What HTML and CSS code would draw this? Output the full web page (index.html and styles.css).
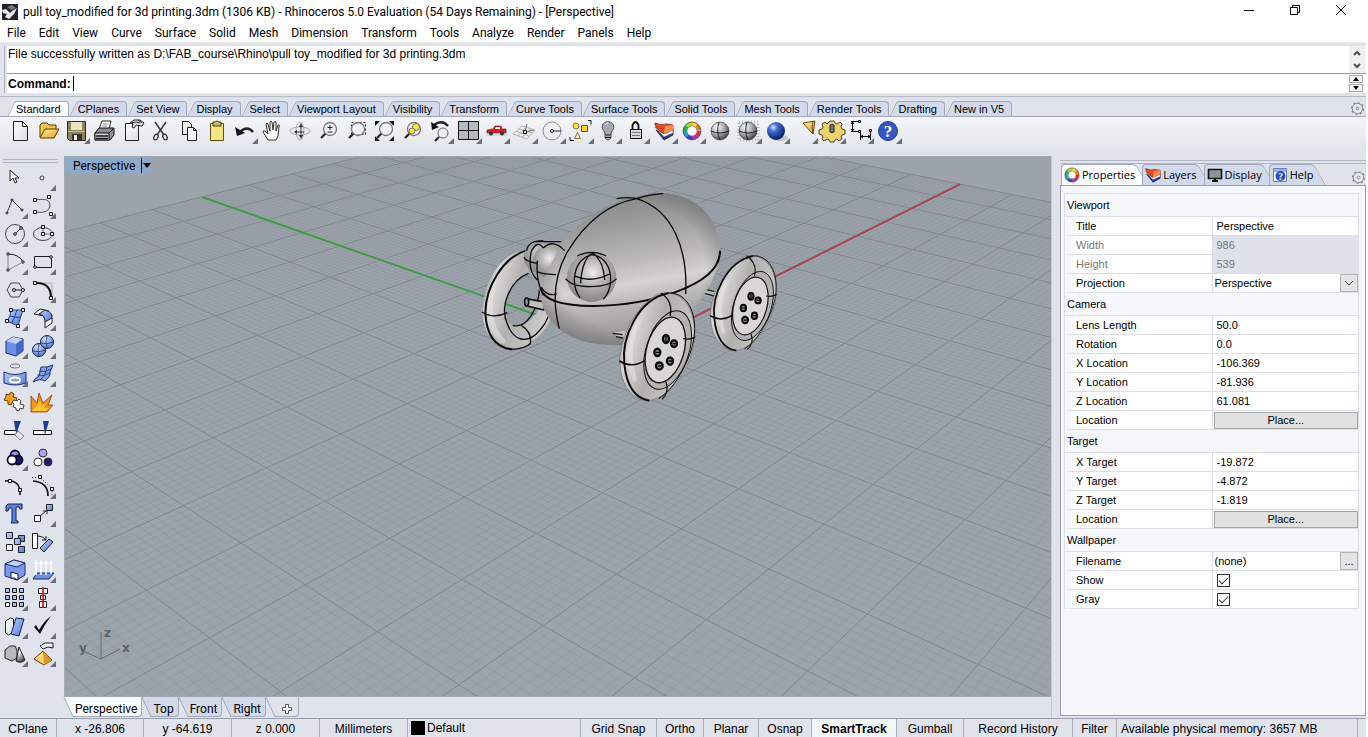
FILE: index.html
```html
<!DOCTYPE html>
<html lang="en">
<head>
    <meta charset="UTF-8">
    <meta name="viewport" content="width=device-width, initial-scale=1.0">
    <title>pull toy_modified for 3d printing.3dm - Rhinoceros 5.0</title>
    <link rel="stylesheet" href="styles.css">
</head>
<body>
    <!-- shared icons and gradients -->
    <svg class="defs" aria-hidden="true">
        <defs>
            <linearGradient id="paper" x1="0" y1="0" x2="1" y2="1"><stop offset="0" stop-color="#fff"/><stop offset="1" stop-color="#d9dce2"/></linearGradient>
            <linearGradient id="blue" x1="0" y1="0" x2="1" y2="1"><stop offset="0" stop-color="#b9cdfb"/><stop offset="1" stop-color="#5577d6"/></linearGradient>
            <linearGradient id="gold" x1="0" y1="0" x2="1" y2="1"><stop offset="0" stop-color="#fff3a8"/><stop offset="1" stop-color="#e59a1c"/></linearGradient>
            <radialGradient id="ballGray" cx=".35" cy=".3" r=".75"><stop offset="0" stop-color="#fff"/><stop offset=".5" stop-color="#a9abae"/><stop offset="1" stop-color="#3c3d40"/></radialGradient>
            <radialGradient id="ballBlue" cx=".35" cy=".3" r=".75"><stop offset="0" stop-color="#e4edff"/><stop offset=".3" stop-color="#3f6fdc"/><stop offset="1" stop-color="#04185c"/></radialGradient>
            <radialGradient id="ballSoft" cx=".4" cy=".3" r=".75"><stop offset="0" stop-color="#dfe8ff"/><stop offset="1" stop-color="#4868c8"/></radialGradient>
            <linearGradient id="tire" x1="0" y1=".2" x2="1" y2=".6"><stop offset="0" stop-color="#8d8c8b"/><stop offset=".2" stop-color="#dad8d6"/><stop offset=".5" stop-color="#b1b0ae"/><stop offset="1" stop-color="#cfcdcb"/></linearGradient>
            <linearGradient id="shell" x1=".42" y1="0" x2=".62" y2="1"><stop offset="0" stop-color="#868687"/><stop offset=".2" stop-color="#9c9b9c"/><stop offset=".45" stop-color="#bcbabb"/><stop offset=".59" stop-color="#d6d4d2"/><stop offset=".7" stop-color="#bcbab9"/><stop offset="1" stop-color="#8c8b8a"/></linearGradient>
            <radialGradient id="rim" cx=".5" cy=".48" r=".56"><stop offset=".75" stop-color="#666" stop-opacity="0"/><stop offset="1" stop-color="#666" stop-opacity=".5"/></radialGradient>
            <radialGradient id="eye" cx=".52" cy=".4" r=".62"><stop offset="0" stop-color="#efedeb"/><stop offset=".4" stop-color="#bbb9b8"/><stop offset="1" stop-color="#838281"/></radialGradient>
        </defs>
        <symbol id="ring" viewBox="0 0 18 18">
            <g fill="none" stroke-width="4">
                <circle cx="9" cy="9" r="6" pathLength="8" stroke="#e8283c" stroke-dasharray="1.1 7"/>
                <circle cx="9" cy="9" r="6" pathLength="8" stroke="#b42fb4" stroke-dasharray="1.1 7" stroke-dashoffset="-1"/>
                <circle cx="9" cy="9" r="6" pathLength="8" stroke="#3747c8" stroke-dasharray="1.1 7" stroke-dashoffset="-2"/>
                <circle cx="9" cy="9" r="6" pathLength="8" stroke="#1e9ed2" stroke-dasharray="1.1 7" stroke-dashoffset="-3"/>
                <circle cx="9" cy="9" r="6" pathLength="8" stroke="#1fb45a" stroke-dasharray="1.1 7" stroke-dashoffset="-4"/>
                <circle cx="9" cy="9" r="6" pathLength="8" stroke="#a6d827" stroke-dasharray="1.1 7" stroke-dashoffset="-5"/>
                <circle cx="9" cy="9" r="6" pathLength="8" stroke="#f6dc1e" stroke-dasharray="1.1 7" stroke-dashoffset="-6"/>
                <circle cx="9" cy="9" r="6" pathLength="8" stroke="#ef7420" stroke-dasharray="1 7" stroke-dashoffset="-7"/>
            </g>
            <circle cx="9" cy="9" r="8" fill="none" stroke="#444" stroke-width=".7"/><circle cx="9" cy="9" r="4.500" fill="#fff" stroke="#777" stroke-width=".6"/>
        </symbol>
        <symbol id="layers" viewBox="0 0 20 20">
            <path d="M2 9l8 10 9-5V9l-9 4z" fill="#24389c" stroke="#111" stroke-width=".7"/>
            <path d="M1 6l9 10 9-4V8l-9 3z" fill="#fff" stroke="#555" stroke-width=".6"/>
            <path d="M1 2q6 3 11 1l7 1v5l-9 4q-5-2-9-9z" fill="#ee4a22" stroke="#6b1408" stroke-width=".7"/>
            <path d="M11 5l8-1v5l-9 4z" fill="#ff8a50"/>
        </symbol>
        <symbol id="lens" viewBox="0 0 28 28">
            <path d="M12 16l-5 5" stroke="#222" stroke-width="2.200"/>
            <circle cx="16" cy="12" r="6.500" fill="#eef1f6" fill-opacity=".6" stroke="#777" stroke-width="1.300"/>
        </symbol>
        <symbol id="cog" viewBox="0 0 16 16">
            <circle cx="8" cy="8" r="6" fill="none" stroke="#888b92" stroke-width="2" pathLength="16" stroke-dasharray="1 1"/>
            <circle cx="8" cy="8" r="5.500" fill="#e4e7ee" stroke="#888b92"/><circle cx="8" cy="8" r="1.500" fill="none" stroke="#888b92"/>
        </symbol>
        <symbol id="wheel" viewBox="0 0 234 330">
            <path d="M124 5C60 30 2 130 4 212C7 282 42 326 87 326C152 323 228 222 228 122C228 50 190-10 124 5z" fill="url(#tire)" stroke="#6d6c6b" stroke-width="2"/>
            <path d="M60 90C34 140 28 200 48 262" fill="none" stroke="#e9e7e5" stroke-width="14" opacity=".5" stroke-linecap="round"/>
            <ellipse cx="147" cy="174" rx="64" ry="122" transform="rotate(18 147 174)" fill="#b4b3b1" stroke="#111" stroke-width="3"/>
            <ellipse cx="140" cy="174" rx="56" ry="101" transform="rotate(16 140 174)" fill="#d9d7d5" stroke="#111" stroke-width="4"/>
            <g fill="none" stroke="#0c0c0c">
                <path d="M150 3C56 22 8 140 17 216C24 286 52 320 92 326" stroke-width="6"/>
                <path d="M150 3C200 2 228 50 228 110C228 190 170 290 120 320" stroke-width="3"/>
                <path d="M2 207Q40 230 78 206" stroke-width="5"/>
                <path d="M128 4C154 22 160 48 154 72M142 270C150 290 144 310 130 322M194 140Q215 144 230 135" stroke-width="4"/>
            </g>
            <g fill="#8d8c8b" stroke="#070707" stroke-width="7">
                <ellipse cx="142" cy="141" rx="9" ry="12"/><ellipse cx="166" cy="155" rx="9" ry="10"/><ellipse cx="116" cy="181" rx="9" ry="11"/><ellipse cx="154" cy="207" rx="9" ry="11"/><ellipse cx="122" cy="222" rx="10" ry="11"/>
                <path d="M142 131v20M162 155h10M112 181h10M150 207h10M118 222h10" stroke-width="4"/>
            </g>
        </symbol>
    </svg>

    <div class="app">
        <header class="titlebar">
            <svg class="app-icon" viewBox="0 0 16 16"><path d="M0 0h16v16H0z" fill="#20242a"/><path d="M0 6l4-1 4 4 2-2 5-3-3 6-5 5-4-2 2-3-4-1z" fill="#e8e8e8"/><path d="M5 3l5-2 4 3-5 2z" fill="#777"/></svg>
            <h1 class="title">pull toy_modified for 3d printing.3dm (1306 KB) - Rhinoceros 5.0 Evaluation (54 Days Remaining) - [Perspective]</h1>
            <div class="window-buttons">
                <button aria-label="Minimize"><svg viewBox="0 0 12 12"><path d="M1 6.500h10"/></svg></button>
                <button aria-label="Restore"><svg viewBox="0 0 12 12"><path d="M1.500 3.500h7v7h-7zM3.500 3.500v-2h7v7h-2"/></svg></button>
                <button aria-label="Close"><svg viewBox="0 0 12 12"><path d="M1 1l10 10M11 1L1 11"/></svg></button>
            </div>
        </header>

        <nav class="menu">
            <a href="#">File</a><a href="#">Edit</a><a href="#">View</a><a href="#">Curve</a><a href="#">Surface</a><a href="#">Solid</a><a href="#">Mesh</a><a href="#">Dimension</a><a href="#">Transform</a><a href="#">Tools</a><a href="#">Analyze</a><a href="#">Render</a><a href="#">Panels</a><a href="#">Help</a>
        </nav>

        <section class="command">
            <div class="history">
                <p>File successfully written as D:\FAB_course\Rhino\pull toy_modified for 3d printing.3dm</p>
                <div class="scroll">
                    <button aria-label="Scroll up"><svg viewBox="0 0 8 6"><path d="M1 5l3-3 3 3"/></svg></button>
                    <button aria-label="Scroll down"><svg viewBox="0 0 8 6"><path d="M1 1l3 3 3-3"/></svg></button>
                </div>
            </div>
            <div class="prompt">
                <label for="cmd">Command:</label>
                <input id="cmd" type="text">
                <div class="spin">
                    <button aria-label="Previous"><svg viewBox="0 0 6 4"><path d="M0 4l3-4 3 4z"/></svg></button>
                    <button aria-label="Next"><svg viewBox="0 0 6 4"><path d="M0 0l3 4 3-4z"/></svg></button>
                </div>
            </div>
        </section>

        <section class="ribbon">
            <div class="ribbon-tabs">
                <button class="tab active">Standard</button><button class="tab">CPlanes</button><button class="tab">Set View</button><button class="tab">Display</button><button class="tab">Select</button><button class="tab">Viewport Layout</button><button class="tab">Visibility</button><button class="tab">Transform</button><button class="tab">Curve Tools</button><button class="tab">Surface Tools</button><button class="tab">Solid Tools</button><button class="tab">Mesh Tools</button><button class="tab">Render Tools</button><button class="tab">Drafting</button><button class="tab">New in V5</button>
                <button class="options" aria-label="Toolbar options"><svg><use href="#cog"/></svg></button>
            </div>
            <div class="tools">
                <button class="tool" aria-label="New"><svg viewBox="0 0 28 28"><path d="M7.500 4.500h9l5 5v14h-14zM16.500 4.500v5h5" fill="url(#paper)" stroke="#222"/></svg></button>
                <button class="tool" aria-label="Open"><svg viewBox="0 0 28 28"><path d="M6 20V8l2-2h5l2 2h7v4" fill="#f3c64a" stroke="#5a3b00"/><path d="M6 21l5-9h14l-5 9z" fill="url(#gold)" stroke="#5a3b00"/></svg></button>
                <button class="tool more" aria-label="Save"><svg viewBox="0 0 28 28"><path d="M5.500 4.500h18v19h-16l-2-2z" fill="#8c8458" stroke="#2c2816"/><path d="M9 5h11v8H9z" fill="#e9e5c6"/><path d="M10 17h10v6H10z" fill="#333"/><path d="M12 18h3v5h-3z" fill="#eee"/><path d="M6 14.500h17" stroke="#c6bf8d"/></svg></button>
                <button class="tool" aria-label="Print"><svg viewBox="0 0 28 28"><path d="M9 12l3-8h9l-2 8z" fill="#fff" stroke="#222"/><path d="M13 7h5M12 9h5" stroke="#888"/><path d="M5 16l4-5h15v7l-4 5H5z" fill="#8b8d90" stroke="#111"/><path d="M5 16h14v7H5z" fill="#d6d8dc" stroke="#111"/><path d="M6 19h12M6 21.500h12" stroke="#111" stroke-width="1.500"/><path d="M19 16l5-5" stroke="#111"/></svg></button>
                <button class="tool" aria-label="Document properties"><svg viewBox="0 0 28 28"><path d="M7.500 6.500h13v17h-13z" fill="url(#paper)" stroke="#222"/><path d="M12 6l4-3h6l4 3-2 3-6-1-2 3-2-1 1-3z" fill="#e8e8e8" stroke="#222"/><path d="M13 6l5-1 4 1M20 3l4 3" stroke="#222" fill="none"/></svg></button>
                <button class="tool" aria-label="Cut"><svg viewBox="0 0 28 28"><path d="M9 5l9 13M20 5L11 18" stroke="#333" stroke-width="1.400"/><ellipse cx="10" cy="20" rx="2" ry="3" transform="rotate(25 10 20)" fill="none" stroke="#333" stroke-width="1.300"/><ellipse cx="19" cy="20" rx="2" ry="3" transform="rotate(-25 19 20)" fill="none" stroke="#333" stroke-width="1.300"/></svg></button>
                <button class="tool" aria-label="Copy"><svg viewBox="0 0 28 28"><path d="M8.500 4.500h6l3 3v10h-9z" fill="url(#paper)" stroke="#222"/><path d="M13.500 10.500h6l3 3v10h-9zM19.500 10.500v3h3" fill="#f6f7f9" stroke="#222"/></svg></button>
                <button class="tool" aria-label="Paste"><svg viewBox="0 0 28 28"><path d="M8.500 6.500h13v17h-13z" fill="#f7e684" stroke="#5d5010"/><path d="M11 5h2l2-1 2 1h2v4h-8z" fill="#c9b968" stroke="#4a3f0e"/></svg></button>
                <button class="tool more" aria-label="Undo"><svg viewBox="0 0 28 28"><path d="M23 15q-6-7-13 0" fill="none" stroke="#222" stroke-width="2.600"/><path d="M5 10l2 9 8-3z" fill="#111"/></svg></button>
                <button class="tool" aria-label="Pan"><svg viewBox="0 0 28 28"><path d="M10 23l-5-8q0-2 2-1l3 3-2-10q1-2 2 0l2 7V5q1-2 2 0l1 8 1-8q1-1 2 0v9l2-6q2-1 1 2l-1 9-2 4z" fill="#f8f8f8" stroke="#333"/></svg></button>
                <button class="tool" aria-label="Rotate view"><svg viewBox="0 0 28 28"><ellipse cx="14" cy="14" rx="10" ry="4" fill="none" stroke="#aaa"/><ellipse cx="14" cy="14" rx="4" ry="9" fill="none" stroke="#aaa"/><path d="M15 10v8M10 15h8" stroke="#333"/><path d="M15 6l2 4h-4zM15 22l-2-4h4zM11 13v4l-3-2z" fill="#333"/></svg></button>
                <button class="tool" aria-label="Zoom dynamic"><svg viewBox="0 0 28 28"><use href="#lens"/><path d="M16 8v5M13.500 10.500h5M13.500 15h5" stroke="#222"/></svg></button>
                <button class="tool" aria-label="Zoom window"><svg viewBox="0 0 28 28"><path d="M9.500 5.500h14v12h-14z" fill="none" stroke="#222" stroke-dasharray="2 2"/><use href="#lens"/></svg></button>
                <button class="tool" aria-label="Zoom extents"><svg viewBox="0 0 28 28"><use href="#lens"/><path d="M5 4h5l-5 5zM24 4h-5l5 5zM5 24h5l-5-5zM24 24h-5l5-5z" fill="#111"/></svg></button>
                <button class="tool" aria-label="Zoom selected"><svg viewBox="0 0 28 28"><use href="#lens"/><circle cx="18" cy="10" r="3.500" fill="#f7e53a" stroke="#777"/><circle cx="14" cy="14" r="3" fill="#f7e53a" stroke="#777"/></svg></button>
                <button class="tool more" aria-label="Undo view"><svg viewBox="0 0 28 28"><path d="M22 9q-6-7-14-1" fill="none" stroke="#222" stroke-width="2.400"/><path d="M5 5l1 8 7-3z" fill="#111"/><path d="M13 20l-4 4" stroke="#222" stroke-width="2"/><circle cx="17" cy="16" r="5" fill="#eef1f6" stroke="#666"/></svg></button>
                <button class="tool more" aria-label="4 View"><svg viewBox="0 0 28 28"><path d="M4.500 4.500h20v18h-20zM14.500 4.500v18M4.500 13.500h20" fill="#b5b9c0" stroke="#111"/></svg></button>
                <button class="tool more" aria-label="Right view"><svg viewBox="0 0 28 28"><path d="M4 18h21" stroke="#bfc3cb"/><path d="M5 13l6-1 2-3h6l1 3h4v4H5z" fill="#d31f26" stroke="#6f0b0f" stroke-width=".6"/><path d="M13 12l1-2h4v2z" fill="#fff"/><circle cx="9" cy="16.500" r="2" fill="#333"/><circle cx="20" cy="16.500" r="2" fill="#333"/></svg></button>
                <button class="tool more" aria-label="Set CPlane"><svg viewBox="0 0 28 28"><path d="M3 17l9-8 13 4-8 9zM6 14l13 5M9 12l13 4M8 19l8-9M12 20l9-8" fill="none" stroke="#b5b0a8"/><path d="M15 15l2-8M15 15l9-2" stroke="#777" fill="none"/><path d="M13.500 13.500h3v3h-3z" fill="#fff" stroke="#111"/></svg></button>
                <button class="tool more" aria-label="Object snap"><svg viewBox="0 0 28 28"><circle cx="14" cy="14" r="9" fill="none" stroke="#8b8e94"/><path d="M14 14h9" stroke="#333"/><circle cx="14" cy="14" r="1.500" fill="#fff" stroke="#222"/></svg></button>
                <button class="tool more" aria-label="Select"><svg viewBox="0 0 28 28"><circle cx="10" cy="9" r="3" fill="#ffdf27" stroke="#777"/><path d="M15.500 8.500h6v6h-6z" fill="#ffd21f" stroke="#a03c00"/><path d="M8.500 21.500l3-6 3 6z" fill="#fbe9d2" stroke="#a0703c"/><path d="M22 3.500h3v4M4 20v3.500h4" fill="none" stroke="#111"/></svg></button>
                <button class="tool more" aria-label="Hide"><svg viewBox="0 0 28 28"><path d="M11 17q0-2-2-4-2-3 0-6 5-5 10 0 2 3 0 6-2 2-2 4v4q-3 4-6 0z" fill="#a6a9ad" stroke="#55585c"/><path d="M11 18h6M11 20.500h6" stroke="#222"/><path d="M11 8q1-2 3-2" stroke="#fff" fill="none"/></svg></button>
                <button class="tool more" aria-label="Lock"><svg viewBox="0 0 28 28"><path d="M10.500 13V8q3-6 6 0v5" fill="none" stroke="#111" stroke-width="1.800"/><path d="M8.500 12.500h11v9h-11z" fill="#d9dadd" stroke="#111"/><path d="M10 15.500h8M10 18.500h8" stroke="#777"/></svg></button>
                <button class="tool more" aria-label="Layers"><svg viewBox="0 0 28 28"><use href="#layers" x="4" y="4" width="20" height="20"/></svg></button>
                <button class="tool more" aria-label="Object properties"><svg viewBox="0 0 28 28"><use href="#ring" x="4" y="4" width="20" height="20"/></svg></button>
                <button class="tool" aria-label="Shade"><svg viewBox="0 0 28 28"><circle cx="14" cy="14" r="9" fill="url(#ballGray)" stroke="#333" stroke-width=".6"/><path d="M5 14q9 4 18 0M13 5q-3 9 1 18" fill="none" stroke="#222"/></svg></button>
                <button class="tool more" aria-label="Shaded viewport"><svg viewBox="0 0 28 28"><path d="M5 5h19v18H5z" fill="none" stroke="#bbb" stroke-dasharray="1 2" stroke-width="3"/><circle cx="14" cy="14" r="9" fill="url(#ballGray)" stroke="#333" stroke-width=".6"/><path d="M5 14q9 4 18 0M13 5q-3 9 1 18" fill="none" stroke="#222"/></svg></button>
                <button class="tool more" aria-label="Render"><svg viewBox="0 0 28 28"><ellipse cx="18" cy="21" rx="8" ry="3" fill="#9a9ca0" opacity=".5"/><circle cx="14" cy="14" r="9" fill="url(#ballBlue)"/></svg></button>
                <button class="tool more" aria-label="Spotlight"><svg viewBox="0 0 28 28"><path d="M13 6l12-2-2 13z" fill="url(#gold)" stroke="#6b4a12"/><path d="M23 4q-2 6 0 13" fill="none" stroke="#6b4a12"/></svg></button>
                <button class="tool more" aria-label="Options"><svg viewBox="0 0 28 28"><path d="M11 5l1-1h4l1 2 2 1 3-2 2 2-1 3 1 2 3 1v4l-3 1-1 2 1 2-3 2-2-2-2 1-1 2h-4l-1-2-2-1-3 2-2-2 1-2-1-2-3-1v-4l3-1 1-2-1-3 3-2 2 2z" fill="#ead36f" stroke="#54431a"/><path d="M12 8q2-1 4 0v7q-2 1-4 0z" fill="#777" stroke="#222"/></svg></button>
                <button class="tool more" aria-label="Dimension"><svg viewBox="0 0 28 28"><path d="M5 4.500h9M5 14.500h8M6.500 5v9M14.500 14v9M24.500 14v9M15 19.500h9" stroke="#111" fill="none"/><path d="M6.500 4l2 3h-4zM6.500 15l2-3h-4zM14 19.500l3-2v4zM25 19.500l-3-2v4z" fill="#111"/><path d="M12.500 3.500h2v2h-2zM12.500 13.500h2v2h-2zM23.500 12.500h2v2h-2z" fill="#fff" stroke="#111"/></svg></button>
                <button class="tool more" aria-label="Help"><svg viewBox="0 0 28 28"><circle cx="14" cy="14" r="9.500" fill="#3556c4" stroke="#24408f"/><text x="14" y="20" class="glyph">?</text></svg></button>
            </div>
        </section>

        <main class="work">
            <aside class="side">
                <div class="grip"></div>
                <div class="side-tools">
                    <button class="tool" aria-label="Cancel"><svg viewBox="0 0 28 28"><path d="M10 6v11l3-3 2 5 2-1-2-4h4z" fill="#fff" stroke="#222"/></svg></button>
                    <button class="tool more" aria-label="Point"><svg viewBox="0 0 28 28"><circle cx="14" cy="14" r="2" fill="#fff" stroke="#333"/></svg></button>
                    <button class="tool more" aria-label="Polyline"><svg viewBox="0 0 28 28"><path d="M7 21l5-13 10 10" fill="none" stroke="#444"/><g fill="#fff" stroke="#111"><circle cx="7" cy="21" r="1"/><circle cx="12" cy="8" r="1"/><circle cx="22" cy="18" r="1"/></g></svg></button>
                    <button class="tool more" aria-label="Curve"><svg viewBox="0 0 28 28"><path d="M7 8q16-3 15 6-1 8-15 6" fill="none" stroke="#555"/><path d="M5.500 6.500h3v3h-3zM19.500 3.500h3v3h-3zM5.500 18.500h3v3h-3zM21.500 20.500h3v3h-3z" fill="#fff" stroke="#111"/></svg></button>
                    <button class="tool more" aria-label="Circle"><svg viewBox="0 0 28 28"><circle cx="15" cy="14" r="9.500" fill="none" stroke="#444"/><path d="M15 14l6-6" stroke="#333"/><g fill="#fff" stroke="#111"><circle cx="15" cy="14" r="1.300"/><circle cx="21" cy="8" r="1.300"/></g></svg></button>
                    <button class="tool more" aria-label="Ellipse"><svg viewBox="0 0 28 28"><ellipse cx="15" cy="14" rx="9.500" ry="6.500" fill="none" stroke="#444"/><path d="M15 7v7h9" fill="none" stroke="#777"/><path d="M13.500 5.500h3v3h-3zM13.500 12.500h3v3h-3zM22.500 12.500h3v3h-3z" fill="#fff" stroke="#111"/></svg></button>
                    <button class="tool more" aria-label="Arc"><svg viewBox="0 0 28 28"><path d="M8 22V6M8 22l15-8" fill="none" stroke="#888"/><path d="M8 6q11 0 15 8" fill="none" stroke="#222"/><g fill="#fff" stroke="#111"><circle cx="8" cy="6" r="1.200"/><circle cx="8" cy="22" r="1.200"/><circle cx="23" cy="14" r="1.200"/></g></svg></button>
                    <button class="tool more" aria-label="Rectangle"><svg viewBox="0 0 28 28"><path d="M6.500 8.500h17v11h-17z" fill="none" stroke="#222"/><g fill="#fff" stroke="#111"><circle cx="23" cy="9" r="1.300"/><circle cx="7" cy="19" r="1.300"/></g></svg></button>
                    <button class="tool more" aria-label="Polygon"><svg viewBox="0 0 28 28"><path d="M7 14l4-7h8l4 7-4 7h-8z" fill="none" stroke="#444"/><path d="M14 14h9" stroke="#222"/><g fill="#fff" stroke="#111"><circle cx="14" cy="14" r="1.500"/><circle cx="23" cy="14" r="1.500"/></g></svg></button>
                    <button class="tool more" aria-label="Fillet curves"><svg viewBox="0 0 28 28"><path d="M7 7h17v16" fill="none" stroke="#aaa"/><path d="M7 7q16-1 16 15" fill="none" stroke="#111" stroke-width="2"/><path d="M5.500 5.500h3v3h-3zM21.500 20.500h3v3h-3z" fill="#fff" stroke="#111"/></svg></button>
                    <button class="tool more" aria-label="Surface from points"><svg viewBox="0 0 28 28"><path d="M11 6h12q-3 8-5 16l-11-5q4-5 4-11z" fill="url(#blue)" stroke="#223a8a"/><path d="M17 6q-3 8-5 13M10 12q6 2 11 1" fill="none" stroke="#223a8a"/><path d="M9.500 4.500h3v3h-3zM21.500 4.500h3v3h-3zM5.500 15.500h3v3h-3zM16.500 20.500h3v3h-3z" fill="#fff" stroke="#111"/></svg></button>
                    <button class="tool more" aria-label="Blend surface"><svg viewBox="0 0 28 28"><path d="M12 5l9 2-5 5-10-2z" fill="#fff" stroke="#222"/><path d="M17 6q8 2 7 9l-7 3q0-7-6-8z" fill="url(#blue)" stroke="#222"/><path d="M24 14v5l-7 5v-6z" fill="#fff" stroke="#222"/></svg></button>
                    <button class="tool more" aria-label="Box"><svg viewBox="0 0 28 28"><path d="M6 9l7-4 10 2v12l-7 5-10-3z" fill="#6f8fe6" stroke="#1a2d75"/><path d="M6 9l7-4 10 2-7 5z" fill="#c1d1fb"/><path d="M16 12l7-5v12l-7 5z" fill="#4767c4"/></svg></button>
                    <button class="tool more" aria-label="Boolean"><svg viewBox="0 0 28 28"><g fill="url(#ballSoft)" stroke="#14235e"><circle cx="11" cy="18" r="6.500"/><circle cx="19" cy="10" r="6.500"/></g><path d="M5 19q6 2 12-1M11 12q-2 6 0 12M13 11q6 2 12-1M19 4q-2 6 0 12" fill="none" stroke="#14235e" stroke-width=".7"/></svg></button>
                    <button class="tool more" aria-label="Project"><svg viewBox="0 0 28 28"><ellipse cx="15" cy="6" rx="5" ry="2" fill="none" stroke="#777"/><path d="M4 12q11 5 22 0v11q-11 4-22 0z" fill="url(#blue)" stroke="#1a2d75"/><ellipse cx="15" cy="20" rx="5" ry="2.500" fill="none" stroke="#fff" stroke-width="2"/></svg></button>
                    <button class="tool more" aria-label="Mesh"><svg viewBox="0 0 28 28"><path d="M13 7q6 1 12-2l-3 7q1 4-5 9-5-3-12 1 2-4 6-6z" fill="#88a2ea" stroke="#1a2d75"/><path d="M9 15q7 2 13-2M11 11q7 2 12-2M19 7q-1 8-7 13" fill="none" stroke="#1a2d75" stroke-width=".8"/></svg></button>
                    <button class="tool" aria-label="Join"><svg viewBox="0 0 28 28"><path d="M6 6l3 1 2-3 3 2-1 3 4 1-1 4-3-1-2 4-3-1v-3l-4-1 2-3z" fill="#f7a11c" stroke="#6b3c00"/><path d="M14 12l3 1 2-2 2 2-1 3 4 1-1 4-3-1-1 3-3-1v-2l-3-1 1-3-2-2z" fill="#fff" stroke="#444"/></svg></button>
                    <button class="tool" aria-label="Explode"><svg viewBox="0 0 28 28"><path d="M3 24V8l6 7 2-10 4 10 9-8-4 10 5 0-6 7z" fill="#f8901e" stroke="#7a3200" stroke-width=".7"/><path d="M4 23l5-6 3-4 2 4 4-1-2 4 5 0-3 3z" fill="#ffc42a"/></svg></button>
                    <button class="tool" aria-label="Trim"><svg viewBox="0 0 28 28"><path d="M4.500 14.500h13v4h-13z" fill="#fff" stroke="#111"/><path d="M18 15l6 5-4 4-5-5z" fill="#e3e6ec" stroke="#888"/><path d="M14 5h7l-5 13z" fill="#1f3b94"/></svg></button>
                    <button class="tool" aria-label="Split"><svg viewBox="0 0 28 28"><path d="M5.500 14.500h18v4h-18z" fill="#fff" stroke="#111"/><path d="M15 5h6l-4 14z" fill="#1f3b94"/></svg></button>
                    <button class="tool more" aria-label="Group"><svg viewBox="0 0 28 28"><g stroke="#080820" stroke-width="1.800"><circle cx="15" cy="11" r="4.500" fill="#9c97e8"/><circle cx="18" cy="16" r="4.500" fill="#1f1a70"/><circle cx="12" cy="16" r="4.500" fill="#fff"/></g></svg></button>
                    <button class="tool" aria-label="Ungroup"><svg viewBox="0 0 28 28"><g stroke="#333"><circle cx="15" cy="9" r="4" fill="#a9a4ee"/><circle cx="20" cy="18" r="4" fill="#1f1a70"/><circle cx="10" cy="18" r="4" fill="#fff"/></g></svg></button>
                    <button class="tool" aria-label="Edit points"><svg viewBox="0 0 28 28"><path d="M5 9q16-2 15 14" fill="none" stroke="#111" stroke-width="1.500"/><path d="M8.500 7.500h3v3h-3zM18.500 16.500h3v3h-3z" fill="#fff" stroke="#111"/></svg></button>
                    <button class="tool more" aria-label="Control points"><svg viewBox="0 0 28 28"><path d="M4 5.500h8l12 11v7" fill="none" stroke="#222" stroke-dasharray="1 2"/><path d="M5 9q15 1 15 15" fill="none" stroke="#111" stroke-width="1.700"/><path d="M10.500 3.500h3v3h-3zM22.500 15.500h3v3h-3z" fill="#fff" stroke="#111"/></svg></button>
                    <button class="tool" aria-label="Text object"><svg viewBox="0 0 28 28"><path d="M6 6l2-2h14v5h-2l-1-2h-3v14h2v2h-7l1-2V8H9l-1 3H6z" fill="#5f80dd" stroke="#14235e"/></svg></button>
                    <button class="tool more" aria-label="Move"><svg viewBox="0 0 28 28"><path d="M6.500 15.500h6v6h-6z" fill="#fff" stroke="#222"/><path d="M18.500 4.500h6v6h-6z" fill="url(#blue)" stroke="#222"/><path d="M12 16l6-5M15 11h4v3" stroke="#222" fill="none"/></svg></button>
                    <button class="tool" aria-label="Copy objects"><svg viewBox="0 0 28 28"><g stroke="#222" fill="url(#blue)"><path d="M6.500 4.500h6v6h-6zM18.500 7.500h6v6h-6z"/><path d="M14.500 10.500h6v6h-6zM18.500 18.500h6v6h-6z"/><path d="M6.500 16.500h6v6h-6z" fill="#fff"/></g></svg></button>
                    <button class="tool" aria-label="Rotate"><svg viewBox="0 0 28 28"><path d="M4.500 5.500h5v15h-5z" fill="#fff" stroke="#222"/><path d="M12 20l9-9 4 3-9 10z" fill="url(#blue)" stroke="#222"/><path d="M10 8q5 0 8 4M18 8v4h-4" fill="none" stroke="#222"/></svg></button>
                    <button class="tool more" aria-label="Solid edit"><svg viewBox="0 0 28 28"><path d="M5 8l9-4 11 3v12l-8 5-12-4z" fill="#7d99ea" stroke="#1a2d75"/><path d="M5 8l9-4 11 3-8 4z" fill="#c1d1fb" stroke="#1a2d75"/><path d="M11 16l7 2v6l-4-2h-3z" fill="#fff" stroke="#222"/></svg></button>
                    <button class="tool more" aria-label="Project curves"><svg viewBox="0 0 28 28"><path d="M9 17h17l-5 6H5z" fill="#6f90ea" stroke="#1a2d75"/><path d="M8 7v12M13 6v13M18 6v13M23 7v11" stroke="#fff" stroke-width="1.500"/><path d="M6 8l2-4 2 4zM11 8l2-4 2 4zM16 8l2-4 2 4zM21 8l2-4 2 4z" fill="#fff"/></svg></button>
                    <button class="tool more" aria-label="Array"><svg viewBox="0 0 28 28"><g fill="#a9bbf3" stroke="#111"><path d="M5.500 4.500h4v4h-4zM12.500 4.500h4v4h-4zM19.500 4.500h4v4h-4zM5.500 11.500h4v4h-4zM12.500 11.500h4v4h-4zM19.500 11.500h4v4h-4zM12.500 18.500h4v4h-4zM19.500 18.500h4v4h-4z"/><path d="M5.500 18.500h4v4h-4z" fill="#fff"/></g></svg></button>
                    <button class="tool more" aria-label="Align"><svg viewBox="0 0 28 28"><path d="M10.500 4.500h9v5h-9zM12.500 11.500h5v4h-5zM11.500 17.500h7v6h-7z" fill="#fff" stroke="#222"/><path d="M15 3v21" stroke="#d8202a" stroke-width="1.800"/></svg></button>
                    <button class="tool more" aria-label="Flow"><svg viewBox="0 0 28 28"><path d="M5.500 9l5-3 3 1v13l-5 3-3-2z" fill="url(#paper)" stroke="#222"/><path d="M16 6l8 1-5 17-8-2z" fill="url(#blue)" stroke="#14235e"/></svg></button>
                    <button class="tool more" aria-label="Check"><svg viewBox="0 0 28 28"><path d="M6 15l2-2 3 5Q16 9 23 4q-6 8-11 18z" fill="#111"/></svg></button>
                    <button class="tool more" aria-label="Layout"><svg viewBox="0 0 28 28"><path d="M5 10l5-4h5l2 4v8l-5 3-7-3z" fill="#b7b9bd" stroke="#222"/><path d="M19 7l6 13q-4 4-9 1z" fill="url(#ballGray)" stroke="#222"/></svg></button>
                    <button class="tool more" aria-label="Render tools"><svg viewBox="0 0 28 28"><path d="M6 19l9-8 9 9-8 5z" fill="#ffd673" stroke="#5a3b00"/><path d="M15 11l1 14 8-5z" fill="#d8952a"/><path d="M12 6l5-3h8v5l-5-1-5 2z" fill="#eee" stroke="#222"/></svg></button>
                </div>
            </aside>

            <section class="stage">
                <div class="viewport">
                    <svg class="scene" viewBox="0 0 986 539" preserveAspectRatio="xMidYMid slice">
                        <path id="gridMinor" class="grid-minor"/>
                        <path id="gridMajor" class="grid-major"/>
                        <path id="axisY" class="axis-y"/>
                        <path id="axisX" class="axis-x"/>

                        <!-- pull toy -->
                        <g transform="translate(395 13) scale(.3333)">
                            <path fill-rule="evenodd" d="M195 241C120 250 68 340 68 430C72 500 110 538 158 538C190 538 208 530 213 514C240 500 262 470 275 440L262 420L236 350L205 300L215 250zM200 312C150 330 130 400 138 432C142 462 160 470 184 466C220 452 240 420 246 390L240 350L215 310z" fill="url(#tire)"/>
                            <path d="M100 340C84 400 84 470 128 512" fill="none" stroke="#eceae8" stroke-width="16" opacity=".45" stroke-linecap="round"/>
                            <g fill="none" stroke="#0c0c0c" stroke-width="4">
                                <path d="M198 242C130 262 76 350 76 430C80 500 110 534 158 538" stroke-width="6"/>
                                <path d="M206 310C150 330 118 410 142 462C160 510 200 528 240 480Q258 460 264 440M158 466C200 478 234 420 240 350"/>
                                <path d="M66 426Q100 448 142 428M184 466C206 480 216 500 210 524M158 538Q196 536 212 520"/>
                            </g>
                            <path d="M198 386l54 10v24l-50-12z" fill="#c4c2c0" stroke="#111" stroke-width="5"/>
                            <ellipse cx="200" cy="396" rx="6" ry="12" fill="#999" stroke="#111" stroke-width="5"/>
                            <path d="M735 360h28v18h-28z" fill="#b5b3b1"/>
                            <path d="M735 358l28 6M733 370l30 8" stroke="#222" stroke-width="4"/>

                            <path d="M205 290Q230 350 252 384L300 340 320 240Q310 212 270 212 216 230 205 290z" fill="#a3a2a1"/>
                            <circle cx="238" cy="262" r="46" fill="url(#eye)"/>
                            <circle cx="266" cy="274" r="48" fill="url(#eye)"/>
                            <path d="M285 260C340 150 460 76 600 70C710 68 780 150 780 240C775 310 750 355 700 420L490 524C380 530 285 500 248 410C236 350 250 320 285 260z" fill="url(#shell)"/>
                            <path d="M285 260C340 150 460 76 600 70C710 68 780 150 780 240C775 310 750 355 700 420L490 524C380 530 285 500 248 410C236 350 250 320 285 260z" fill="url(#rim)"/>
                            <g fill="none" stroke="#0a0a0a" stroke-width="4">
                                <path d="M242 355C252 395 320 408 400 408C560 406 782 350 780 242" stroke-width="6"/>
                                <path d="M298 476C278 400 280 320 322 246C380 150 450 100 530 86Q570 72 610 71M530 86C640 120 684 240 677 372M470 86Q500 80 530 86"/>
                                <path d="M200 242Q204 212 250 212M192 262Q196 274 230 280M220 215h84M250 234Q280 205 314 242M250 234Q232 208 214 244C206 280 210 310 232 330M232 306Q256 314 288 314M232 272C228 320 236 350 250 376M244 352Q260 380 290 372"/>
                            </g>
                            <circle cx="395" cy="322" r="74" fill="url(#eye)"/>
                            <g fill="none" stroke="#0a0a0a" stroke-width="4">
                                <path d="M317 326C340 358 440 358 470 326M342 318Q395 340 448 312M360 384C330 340 340 270 395 254C460 262 466 350 430 388M362 340C364 290 380 256 398 250M398 250Q430 270 434 330M352 258Q395 236 438 258"/>
                            </g>
                            <path d="M462 488l34-6v18l-24 2z" fill="#c4c2c0"/>
                            <path d="M458 490l30 4M468 500l20 4" stroke="#111" stroke-width="4"/>
                            <use href="#wheel" x="748" y="248" width="206" height="304"/>
                            <use href="#wheel" x="476" y="366" width="234" height="330"/>
                        </g>

                        <g class="triad">
                            <path d="M36 475v27l-20-9M36 502l19-10"/>
                            <text x="39" y="480">z</text><text x="14" y="495">y</text><text x="57" y="495">x</text>
                        </g>
                    </svg>
                    <button class="view-title">Perspective <span class="arrow"></span></button>
                </div>
                <div class="view-tabs">
                    <button class="tab active">Perspective</button><button class="tab">Top</button><button class="tab">Front</button><button class="tab">Right</button><button class="tab add" aria-label="New viewport"><svg viewBox="0 0 10 10"><path d="M3.500.5h3v3h3v3h-3v3h-3v-3h-3v-3h3z"/></svg></button>
                </div>
            </section>

            <aside class="panel">
                <div class="grip"></div>
                <div class="panel-tabs">
                    <button class="tab active"><svg><use href="#ring"/></svg>Properties</button>
                    <button class="tab"><svg><use href="#layers"/></svg>Layers</button>
                    <button class="tab"><svg viewBox="0 0 16 16"><path d="M1.500 2.500h13v9h-13z" fill="#8f9698" stroke="#111" stroke-width="1.600"/><path d="M5 14h6M8 12v2" stroke="#111" stroke-width="2"/></svg>Display</button>
                    <button class="tab"><svg viewBox="0 0 16 16"><path d="M1.500 1.500h13v13h-13z" fill="#fff" stroke="#6b7fc0"/><path d="M2 2h12v3H2z" fill="#9fb2e4"/><circle cx="8.500" cy="9" r="5" fill="#2a4bc0"/><text x="8.500" y="13" class="glyph small">?</text></svg>Help</button>
                    <button class="options" aria-label="Panel options"><svg><use href="#cog"/></svg></button>
                </div>
                <div class="panel-body">
                    <table class="props">
                        <tbody>
                            <tr class="group"><th colspan="2">Viewport</th></tr>
                            <tr><th><label for="p-title">Title</label></th><td><input id="p-title" value="Perspective"></td></tr>
                            <tr class="off"><th><label for="p-width">Width</label></th><td><input id="p-width" value="986" disabled></td></tr>
                            <tr class="off"><th><label for="p-height">Height</label></th><td><input id="p-height" value="539" disabled></td></tr>
                            <tr><th><label for="p-proj">Projection</label></th><td><div class="field"><select id="p-proj"><option>Perspective</option><option>Parallel</option></select><span class="drop"><svg viewBox="0 0 10 6"><path d="M1 1l4 4 4-4"/></svg></span></div></td></tr>
                            <tr class="group"><th colspan="2">Camera</th></tr>
                            <tr><th><label for="p-lens">Lens Length</label></th><td><input id="p-lens" value="50.0"></td></tr>
                            <tr><th><label for="p-rot">Rotation</label></th><td><input id="p-rot" value="0.0"></td></tr>
                            <tr><th><label for="p-xl">X Location</label></th><td><input id="p-xl" value="-106.369"></td></tr>
                            <tr><th><label for="p-yl">Y Location</label></th><td><input id="p-yl" value="-81.936"></td></tr>
                            <tr><th><label for="p-zl">Z Location</label></th><td><input id="p-zl" value="61.081"></td></tr>
                            <tr><th><label for="p-cam">Location</label></th><td><button id="p-cam" class="place">Place...</button></td></tr>
                            <tr class="group"><th colspan="2">Target</th></tr>
                            <tr><th><label for="p-xt">X Target</label></th><td><input id="p-xt" value="-19.872"></td></tr>
                            <tr><th><label for="p-yt">Y Target</label></th><td><input id="p-yt" value="-4.872"></td></tr>
                            <tr><th><label for="p-zt">Z Target</label></th><td><input id="p-zt" value="-1.819"></td></tr>
                            <tr><th><label for="p-tar">Location</label></th><td><button id="p-tar" class="place">Place...</button></td></tr>
                            <tr class="group"><th colspan="2">Wallpaper</th></tr>
                            <tr><th><label for="p-file">Filename</label></th><td><div class="field"><input id="p-file" value="(none)"><button class="browse" aria-label="Browse">...</button></div></td></tr>
                            <tr><th><label for="p-show">Show</label></th><td><input id="p-show" type="checkbox" checked></td></tr>
                            <tr><th><label for="p-gray">Gray</label></th><td><input id="p-gray" type="checkbox" checked></td></tr>
                        </tbody>
                    </table>
                </div>
            </aside>
        </main>

        <footer class="status">
            <button>CPlane</button><span>x -26.806</span><span>y -64.619</span><span>z 0.000</span><button>Millimeters</button>
            <button class="layer"><i class="swatch"></i>Default</button>
            <button>Grid Snap</button><button>Ortho</button><button>Planar</button><button>Osnap</button><button class="on">SmartTrack</button><button>Gumball</button><button>Record History</button><button>Filter</button>
            <span class="memory">Available physical memory: 3657 MB</span>
        </footer>
    </div>
    <script src="script.js"></script>
</body>
</html>
```
FILE: styles.css
```css
* {
    box-sizing: border-box;
}
body {
    margin: 0;
    background: #fff;
    color: #000;
    font-family: "Liberation Sans", Arial, sans-serif;
    font-size: 12px;
}
button, input, select {
    font: inherit;
    color: inherit;
    background: none;
    border: 0;
    margin: 0;
    padding: 0;
}
.defs {
    position: absolute;
    width: 0;
    height: 0;
}
.app {
    display: flex;
    flex-direction: column;
    height: 100vh;
    padding-right: 2px;
    overflow: hidden;
}

/* title and menu */
.titlebar {
    display: flex;
    align-items: center;
    height: 23px;
    padding-left: 2px;
    font-family: Roboto, sans-serif;
}
.app-icon {
    width: 16px;
    height: 16px;
    margin-right: 5px;
}
.title {
    flex: 1;
    margin: 0;
    font-size: 12px;
    font-weight: normal;
    white-space: nowrap;
}
.window-buttons {
    display: flex;
    padding-right: 2px;
}
.window-buttons button {
    width: 46px;
    height: 20px;
}
.window-buttons svg {
    width: 12px;
    height: 12px;
    fill: none;
    stroke: #000;
}
.menu {
    display: flex;
    gap: 13px;
    height: 19px;
    padding-left: 7px;
    font-family: Roboto, sans-serif;
    font-size: 12px;
    line-height: 20px;
}
.menu a {
    color: #000;
    text-decoration: none;
}

/* command line */
.command {
    padding: 3px 0 3px 3px;
    border-top: 1px solid #eee;
    background: #e0e3eb;
}
.history, .prompt {
    display: flex;
    background: #fff;
    margin-left: 4px;
    box-shadow: -2px 0 #e0e3eb, -3px 0 #a9afbd;
}
.history {
    height: 28px;
    border-bottom: 1px solid #999ca3;
}
.history p {
    flex: 1;
    margin: 0;
    padding: 1px;
    line-height: 14px;
}
.scroll {
    display: flex;
    flex-direction: column;
    width: 17px;
    padding-right: 2px;
    background: #f0f0f0;
}
.scroll button {
    height: 14px;
    line-height: 0;
}
.scroll svg {
    width: 8px;
    height: 6px;
    fill: none;
    stroke: #505050;
    stroke-width: 2;
}
.prompt {
    height: 19px;
    align-items: center;
}
.prompt label {
    padding: 0 2px 0 1px;
    font-weight: bold;
}
.prompt input {
    flex: 1;
    height: 15px;
    border-left: 1px solid #000;
    outline: none;
}
.spin {
    display: flex;
    flex-direction: column;
    gap: 1px;
    width: 17px;
    padding-right: 2px;
}
.spin button {
    height: 8px;
    margin-right: 1px;
    line-height: 0;
    background: #f3f3f3;
    border: 1px solid #aaa;
}
.spin svg {
    width: 6px;
    height: 4px;
}

/* tabs */
.tab {
    position: relative;
    z-index: 0;
    white-space: nowrap;
}
.tab::before, .tab::after {
    content: "";
    position: absolute;
    z-index: -1;
    top: 0;
    bottom: 0;
    background: #d2d9ea;
    border: 0 solid #a3a9b8;
}
.tab.active::before, .tab.active::after {
    background: #fbfcfd;
}
.ribbon {
    background: #e0e3eb;
    border-top: 1px solid #b5bac8;
}
.ribbon-tabs {
    display: flex;
    height: 20px;
    padding: 4px 1px 0 7px;
    border-bottom: 1px solid #a3a9b8;
}
.ribbon-tabs .tab {
    padding: 1px 8px 0 9px;
    font-size: 11px;
    line-height: 14px;
}
.ribbon-tabs .tab::before {
    left: 4px;
    width: 50%;
    border-width: 1px 0 0 1px;
    border-radius: 3px 0 0 0;
    transform: skewX(-25deg);
}
.ribbon-tabs .tab::after {
    left: 30%;
    right: 0;
    border-width: 1px 1px 0 0;
    border-radius: 0 4px 0 0;
}
.options {
    margin-left: auto;
    line-height: 0;
}
.options svg {
    width: 15px;
    height: 15px;
}
.tools {
    display: flex;
    height: 39px;
    padding: 0 0 0 6px;
    background: linear-gradient(#f3f5f8, #dfe2ea);
}
.tool {
    position: relative;
    width: 28px;
    height: 28px;
    line-height: 0;
}
.tool svg {
    width: 28px;
    height: 28px;
}
.tool.more::after {
    content: "";
    position: absolute;
    right: 0;
    bottom: 1px;
    border: 3px solid;
    border-color: transparent #6b6e74 #6b6e74 transparent;
}
.glyph {
    fill: #fff;
    font: bold 17px "Liberation Serif", serif;
    text-anchor: middle;
}
.glyph.small {
    font-size: 10px;
}

/* work area */
.work {
    flex: 1;
    display: flex;
    min-height: 0;
    background: #e0e3eb;
}
.side {
    width: 64px;
    padding-top: 3px;
}
.grip {
    height: 4px;
    margin: 0 6px 1px 3px;
    border: 1px solid #b2b7c5;
    border-width: 1px 0;
}
.side-tools {
    display: grid;
    grid-template-columns: 28px 28px;
}
.stage {
    flex: 1;
    display: flex;
    flex-direction: column;
    min-width: 0;
}
.viewport {
    position: relative;
    flex: 1;
    min-height: 0;
    border: 1px solid #a3a8b1;
    border-right: 0;
    background: #9da3aa;
}
.scene {
    display: block;
    width: 100%;
    height: 100%;
    fill: none;
}
.grid-minor {
    stroke: #88909a;
    stroke-width: 1;
    opacity: .33;
}
.grid-major {
    stroke: #82878f;
    stroke-width: 1;
}
.axis-x {
    stroke: #a8434e;
    stroke-width: 2;
}
.axis-y {
    stroke: #3f9c45;
    stroke-width: 2;
}
.triad path {
    stroke: #666a70;
    stroke-width: 1;
}
.triad text {
    fill: #5f6369;
    font: bold 12px "DejaVu Sans", sans-serif;
}
.view-title {
    position: absolute;
    top: 0;
    left: 1px;
    display: flex;
    align-items: center;
    height: 17px;
    padding: 0 0 0 7px;
    background: #8eaacb;
    font-family: Roboto, sans-serif;
    font-size: 12px;
}
.arrow {
    height: 15px;
    margin-left: 6px;
    padding: 5px 0 0 1px;
    border-left: 1px solid #000;
}
.arrow::before {
    content: "";
    display: block;
    border: 4px solid transparent;
    border-top: 5px solid #000;
    border-bottom: 0;
}
.view-tabs {
    display: flex;
    height: 21px;
    padding-bottom: 1px;
}
.view-tabs .tab {
    padding: 3px 5px 0 11px;
    font-family: Roboto, sans-serif;
    font-size: 12px;
    line-height: 16px;
}
.view-tabs .tab::before {
    left: 4px;
    width: 50%;
    border-width: 0 0 1px 1px;
    transform: skewX(25deg);
}
.view-tabs .tab::after {
    left: 30%;
    right: 0;
    border-width: 0 1px 1px 0;
    border-radius: 0 0 4px 0;
}
.view-tabs .add {
    padding: 3px 7px 0 16px;
    line-height: 0;
}
.view-tabs .add::before, .view-tabs .add::after {
    background: #e0e3eb;
}
.add svg {
    width: 10px;
    height: 10px;
    fill: #fff;
    stroke: #555;
}

/* properties panel */
.panel {
    display: flex;
    flex-direction: column;
    width: 315px;
    padding: 4px 0 2px 8px;
    border-left: 1px solid #c3c8d3;
}
.panel .grip {
    margin: 0;
}
.panel-tabs {
    display: flex;
    height: 21px;
    padding-left: 1px;
}
.panel-tabs .tab {
    display: flex;
    align-items: center;
    gap: 2px;
    padding: 0 7px 0 3px;
    font-family: "Open Sans", sans-serif;
    font-size: 11px;
}
.panel-tabs .tab svg {
    width: 16px;
    height: 16px;
}
.panel-tabs .tab::before {
    left: 0;
    width: 50%;
    border-width: 1px 0 0 1px;
    border-radius: 4px 0 0 0;
}
.panel-tabs .tab::after {
    left: 30%;
    right: 0;
    border-width: 1px 1px 0 0;
    border-radius: 0 4px 0 0;
    transform: skewX(30deg);
}
.panel-tabs .options {
    padding-top: 5px;
}
.panel-body {
    flex: 1;
    padding: 7px 6px 0 3px;
    border: 1px solid #9a9fb0;
    background: #f6f7fa;
}
.props {
    width: 100%;
    table-layout: fixed;
    border-collapse: separate;
    border-spacing: 0;
    border: 1px solid #dcdfe6;
    border-bottom: 0;
    font-size: 11px;
}
.props th, .props td {
    height: 19px;
    padding: 0;
    border-bottom: 1px solid #dcdfe6;
    font-weight: normal;
    text-align: left;
    line-height: 16px;
}
.props th {
    width: 50%;
    padding-left: 3px;
    background: #fff;
    border-left: 8px solid #f6f7fa;
}
.props td {
    padding-left: 1px;
    border-left: 1px solid #dcdfe6;
    background: #fff;
}
.props .group th {
    height: 23px;
    padding-left: 2px;
    border-left: 0;
    background: #f6f7fa;
}
.props .off th {
    color: #777;
}
.props .off td {
    background: #dfe2ea;
    color: #777;
}
.props input, .props select {
    display: block;
    width: 100%;
    height: 16px;
    padding: 0 3px;
    appearance: none;
}
.props .field {
    display: flex;
    height: 18px;
}
.props .field input, .props .field select {
    flex: 1;
    width: 0;
    height: 18px;
    padding: 0 1px;
}
.drop, .browse {
    width: 18px;
    background: #e4e4e4;
    border: 1px solid #b5b5b5;
    text-align: center;
    line-height: 14px;
}
.drop svg {
    width: 10px;
    height: 6px;
    fill: none;
    stroke: #444;
}
.place {
    display: block;
    width: 100%;
    height: 17px;
    background: #e1e1e1;
    border: 1px solid #a6a6a6;
    line-height: 15px;
}
.props input[type="checkbox"] {
    width: 13px;
    height: 13px;
    margin-left: 3px;
    padding: 0;
    border: 1px solid #333;
    background: #fff;
}
.props input[type="checkbox"]:checked::before {
    content: "";
    display: block;
    width: 8px;
    height: 4px;
    margin: 2px 0 0 1px;
    border: solid #333;
    border-width: 0 0 1px 1px;
    transform: rotate(-45deg);
}

/* status bar */
.status {
    display: grid;
    grid-template-columns: 57px 87px 88px 88px 88px 1fr 76px 47px 55px 53px 85px 67px 109px 44px 241px 8px;
    height: 19px;
    border-top: 1px solid #9a9fb0;
    background: #e0e3eb;
    line-height: 20px;
    text-align: center;
}
.status > * {
    height: 18px;
    border-right: 1px solid #a9aebb;
    white-space: nowrap;
}
.status .layer {
    display: flex;
    align-items: center;
    gap: 2px;
    padding-left: 3px;
}
.swatch {
    width: 14px;
    height: 14px;
    background: #000;
}
.status .on {
    background: #f3f8fc;
    font-weight: bold;
}
.status .memory {
    padding-left: 4px;
    text-align: left;
}
```
FILE: script.js
```js
// perspective camera, same numbers as the properties panel
const camera = [-106.369, -81.936, 61.081];
const target = [-19.872, -4.872, -1.819];
const width = 986;
const height = 539;
const focal = (height / 2) / (12 / 50);

const dot = (a, b) => a[0] * b[0] + a[1] * b[1] + a[2] * b[2];
const cross = (a, b) => [a[1] * b[2] - a[2] * b[1], a[2] * b[0] - a[0] * b[2], a[0] * b[1] - a[1] * b[0]];
const unit = a => a.map(n => n / Math.hypot(...a));

const forward = unit(target.map((n, i) => n - camera[i]));
const right = unit(cross(forward, [0, 0, 1]));
const up = cross(right, forward);

function project(x, y) {
    const v = [x - camera[0], y - camera[1], -camera[2]];
    const depth = dot(v, forward);
    const px = width / 2 + focal * dot(v, right) / depth;
    const py = height / 2 - focal * dot(v, up) / depth;
    return px.toFixed(1) + ' ' + py.toFixed(1);
}

function line(x1, y1, x2, y2) {
    return 'M' + project(x1, y1) + 'L' + project(x2, y2);
}

let minor = '';
let major = '';
for (let i = -100; i <= 100; i++) {
    const d = line(i, -100, i, 100) + line(-100, i, 100, i);
    if (i % 10 === 0) {
        major += d;
    } else {
        minor += d;
    }
}

document.getElementById('gridMinor').setAttribute('d', minor);
document.getElementById('gridMajor').setAttribute('d', major);
document.getElementById('axisX').setAttribute('d', line(0, 0, 100, 0));
document.getElementById('axisY').setAttribute('d', line(0, 0, 0, 100));
```
